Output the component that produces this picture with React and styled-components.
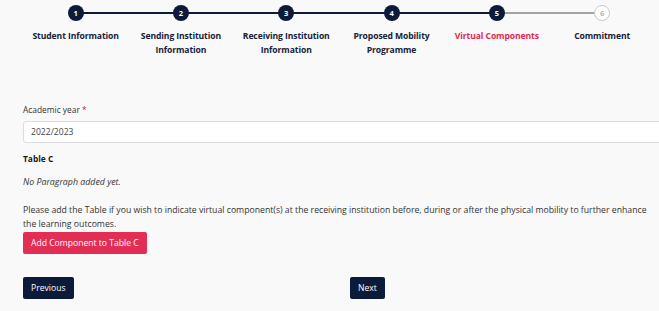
import React from 'react';
import styled, { createGlobalStyle } from 'styled-components';

const GlobalStyle = createGlobalStyle`
  html, body {
    margin: 0;
    padding: 0;
    background: #f9f9f9;
    overflow: hidden;
  }
  body {
    font-family: "Open Sans", "Noto Sans", "Liberation Sans", sans-serif;
    color: #212529;
  }
`;

const Page = styled.div`
  width: 659px;
  height: 311px;
  padding: 5px 0 0 23px;
  box-sizing: border-box;
  overflow: hidden;
`;

const Stepper = styled.div`
  display: grid;
  grid-template-columns: repeat(6, 105.3px);
  width: 632px;
`;

const Step = styled.div`
  position: relative;
  display: flex;
  flex-direction: column;
  align-items: center;
`;

const Connector = styled.span`
  position: absolute;
  top: 7px;
  left: 50%;
  width: 100%;
  height: 2px;
  background: ${p => (p.$done ? '#0d1b3a' : '#a3a3a3')};
  z-index: 0;
`;

const Dot = styled.span`
  position: relative;
  z-index: 1;
  width: 16px;
  height: 16px;
  border-radius: 50%;
  box-sizing: border-box;
  display: flex;
  align-items: center;
  justify-content: center;
  font-size: 7.5px;
  font-weight: 700;
  background: ${p => (p.$pending ? '#fff' : '#0d1b3a')};
  color: ${p => (p.$pending ? '#b5b5b5' : '#fff')};
  border: ${p => (p.$pending ? '1.5px solid #c9c9c9' : 'none')};
`;

const StepLabel = styled.div`
  margin-top: 8px;
  font-size: 8.6px;
  font-weight: 700;
  line-height: 14px;
  text-align: center;
  color: ${p => (p.$active ? '#e0294f' : '#16213a')};
  letter-spacing: -0.1px;
`;

const Form = styled.div`
  margin-top: 47px;
`;

const Label = styled.div`
  font-size: 8.4px;
  line-height: 12px;
  color: #333;
  margin-bottom: 5px;
`;

const Required = styled.span`
  color: #e0102f;
`;

const Input = styled.div`
  width: 660px;
  height: 22px;
  box-sizing: border-box;
  background: #fff;
  border: 1px solid #dcdce0;
  border-radius: 3px 0 0 3px;
  padding: 0 7px;
  font-size: 8.6px;
  line-height: 20px;
  color: #444;
`;

const Heading = styled.div`
  margin-top: 10px;
  font-size: 8.4px;
  font-weight: 700;
  line-height: 12px;
  color: #1a1a1a;
`;

const Empty = styled.div`
  margin-top: 11px;
  font-size: 8.8px;
  font-style: italic;
  line-height: 12px;
  color: #333;
`;

const Note = styled.p`
  margin: 15px 0 0;
  width: 632px;
  font-size: 8.7px;
  line-height: 14px;
  color: #333;
`;

const Button = styled.button`
  font-family: inherit;
  font-size: 8.6px;
  height: 22px;
  padding: 0 8px;
  border: none;
  border-radius: 2px;
  color: #fff;
  background: ${p => (p.$variant === 'danger' ? '#e22d55' : '#0d1b3a')};
  cursor: pointer;
`;

const AddRow = styled.div`
  display: flex;
  margin-top: 1px;
`;

const NavRow = styled.div`
  margin-top: 23px;
  display: grid;
  grid-template-columns: 327px auto;
  justify-items: start;
`;

const steps = [
  ['Student Information'],
  ['Sending Institution', 'Information'],
  ['Receiving Institution', 'Information'],
  ['Proposed Mobility', 'Programme'],
  ['Virtual Components'],
  ['Commitment'],
];

const current = 5;

export default function App() {
  return (
    <Page>
      <GlobalStyle />
      <Stepper>
        {steps.map((lines, i) => {
          const n = i + 1;
          return (
            <Step key={n}>
              {n < steps.length && <Connector $done={n < current} />}
              <Dot $pending={n > current}>{n}</Dot>
              <StepLabel $active={n === current}>
                {lines.map((l, j) => (
                  <div key={j}>{l}</div>
                ))}
              </StepLabel>
            </Step>
          );
        })}
      </Stepper>

      <Form>
        <Label>
          Academic year <Required>*</Required>
        </Label>
        <Input>2022/2023</Input>
        <Heading>Table C</Heading>
        <Empty>No Paragraph added yet.</Empty>
        <Note>
          Please add the Table if you wish to indicate virtual component(s) at the receiving
          institution before, during or after the physical mobility to further enhance the
          learning outcomes.
        </Note>
        <AddRow>
          <Button $variant="danger">Add Component to Table C</Button>
        </AddRow>
        <NavRow>
          <Button>Previous</Button>
          <Button>Next</Button>
        </NavRow>
      </Form>
    </Page>
  );
}
